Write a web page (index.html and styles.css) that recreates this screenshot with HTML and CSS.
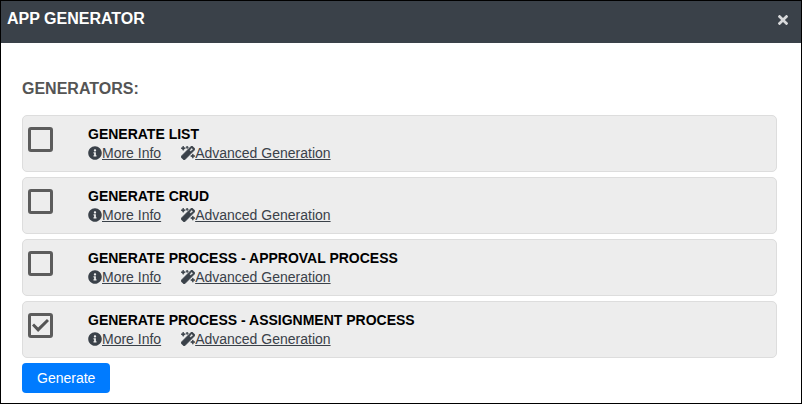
FILE: index.html
```html
<!DOCTYPE html>
<html lang="en">
<head>
<meta charset="utf-8">
<title>App Generator</title>
<link rel="stylesheet" href="styles.css">
</head>
<body>
<svg class="sprite" aria-hidden="true">
  <symbol id="info" viewBox="0 0 512 512"><path d="M256 8C119.043 8 8 119.083 8 256c0 136.997 111.043 248 248 248s248-111.003 248-248C504 119.083 392.957 8 256 8zm0 110c23.196 0 42 18.804 42 42s-18.804 42-42 42-42-18.804-42-42 18.804-42 42-42zm56 254c0 6.627-5.373 12-12 12h-88c-6.627 0-12-5.373-12-12v-24c0-6.627 5.373-12 12-12h12v-64h-12c-6.627 0-12-5.373-12-12v-24c0-6.627 5.373-12 12-12h64c6.627 0 12 5.373 12 12v100h12c6.627 0 12 5.373 12 12v24z"/></symbol>
  <symbol id="magic" viewBox="0 0 512 512"><path stroke="#3a4149" stroke-width="24" d="M224 96l16-32 32-16-32-16-16-32-16 32-32 16 32 16 16 32zM80 160l26.66-53.33L160 80l-53.34-26.67L80 0 53.34 53.33 0 80l53.34 26.67L80 160zm352 128l-26.66 53.33L352 368l53.34 26.67L432 448l26.66-53.33L512 368l-53.34-26.67L432 288zm70.62-193.77L417.77 9.38C411.53 3.12 403.34 0 395.15 0c-8.19 0-16.38 3.12-22.63 9.38L9.38 372.52c-12.5 12.5-12.5 32.76 0 45.25l84.85 84.85c6.25 6.25 14.44 9.37 22.62 9.37 8.19 0 16.38-3.12 22.63-9.37l363.14-363.15c12.5-12.48 12.5-32.75 0-45.24zM359.45 203.46l-50.91-50.91 86.6-86.6 50.91 50.91-86.6 86.6z"/></symbol>
</svg>
<main class="dialog">
  <header class="dialog-header">
    <h1 class="dialog-title">APP GENERATOR</h1>
    <button class="close" type="button" aria-label="Close">
      <svg viewBox="0 80 352 352" aria-hidden="true"><path d="M242.72 256l100.07-100.07c12.28-12.28 12.28-32.19 0-44.48l-22.24-22.24c-12.28-12.28-32.19-12.28-44.48 0L176 189.28 75.93 89.21c-12.28-12.28-32.19-12.28-44.48 0L9.21 111.45c-12.28 12.28-12.28 32.19 0 44.48L109.28 256 9.21 356.07c-12.28 12.28-12.28 32.19 0 44.48l22.24 22.24c12.28 12.28 32.2 12.28 44.48 0L176 322.72l100.07 100.07c12.28 12.28 32.2 12.28 44.48 0l22.24-22.24c12.28-12.28 12.28-32.19 0-44.48L242.72 256z"/></svg>
    </button>
  </header>
  <form class="dialog-body">
    <h2 class="section-title">GENERATORS:</h2>
    <div class="generators">
      <div class="generator">
        <input class="check" type="checkbox" id="gen-list">
        <div class="details">
          <label class="name" for="gen-list">GENERATE LIST</label>
          <div class="links">
            <a class="link" href="#"><svg class="icon" aria-hidden="true"><use href="#info"/></svg><span>More Info</span></a>
            <a class="link" href="#"><svg class="icon" aria-hidden="true"><use href="#magic"/></svg><span>Advanced Generation</span></a>
          </div>
        </div>
      </div>
      <div class="generator">
        <input class="check" type="checkbox" id="gen-crud">
        <div class="details">
          <label class="name" for="gen-crud">GENERATE CRUD</label>
          <div class="links">
            <a class="link" href="#"><svg class="icon" aria-hidden="true"><use href="#info"/></svg><span>More Info</span></a>
            <a class="link" href="#"><svg class="icon" aria-hidden="true"><use href="#magic"/></svg><span>Advanced Generation</span></a>
          </div>
        </div>
      </div>
      <div class="generator">
        <input class="check" type="checkbox" id="gen-approval">
        <div class="details">
          <label class="name" for="gen-approval">GENERATE PROCESS - APPROVAL PROCESS</label>
          <div class="links">
            <a class="link" href="#"><svg class="icon" aria-hidden="true"><use href="#info"/></svg><span>More Info</span></a>
            <a class="link" href="#"><svg class="icon" aria-hidden="true"><use href="#magic"/></svg><span>Advanced Generation</span></a>
          </div>
        </div>
      </div>
      <div class="generator">
        <input class="check" type="checkbox" id="gen-assignment" checked>
        <div class="details">
          <label class="name" for="gen-assignment">GENERATE PROCESS - ASSIGNMENT PROCESS</label>
          <div class="links">
            <a class="link" href="#"><svg class="icon" aria-hidden="true"><use href="#info"/></svg><span>More Info</span></a>
            <a class="link" href="#"><svg class="icon" aria-hidden="true"><use href="#magic"/></svg><span>Advanced Generation</span></a>
          </div>
        </div>
      </div>
    </div>
    <button class="submit" type="button">Generate</button>
  </form>
</main>
</body>
</html>
```
FILE: styles.css
```css
* {
  box-sizing: border-box;
}

body {
  margin: 0;
  background: #fff;
  font-family: "Liberation Sans", Arial, sans-serif;
  font-size: 14px;
  line-height: 19px;
}

.sprite {
  display: none;
}

.dialog {
  min-height: 100vh;
  border: 1px solid #000;
}

.dialog-header {
  display: flex;
  justify-content: space-between;
  align-items: flex-start;
  padding: 9px 13px 15px 6px;
  background: #3a4149;
}

.dialog-title {
  margin: 0;
  color: #fff;
  font-size: 16px;
  line-height: 18px;
}

.close {
  display: flex;
  padding: 5px 0 0;
  border: 0;
  background: none;
  fill: #d8d9db;
}

.close svg {
  width: 10px;
  height: 10px;
}

.dialog-body {
  padding: 37px 24px 10px 21px;
}

.section-title {
  margin: 0 0 17px;
  color: #555;
  font-size: 16px;
  line-height: 18px;
}

.generators {
  display: grid;
  gap: 5px;
  margin-bottom: 5px;
}

.generator {
  display: grid;
  grid-template-columns: 60px 1fr;
  align-items: start;
  padding: 9px 5px 8px;
  border: 1px solid #ddd;
  border-radius: 5px;
  background: #ededed;
}

.check {
  appearance: none;
  display: grid;
  place-items: center;
  width: 25px;
  height: 25px;
  margin: 2px 0 0;
  border: 3px solid #5c5c5c;
  border-radius: 3px;
}

.check:checked::before {
  content: "";
  width: 17px;
  height: 13px;
  background: #555;
  clip-path: polygon(0 50%, 12% 35%, 36% 66%, 88% 0, 100% 15%, 36% 100%);
}

.name {
  display: block;
  color: #000;
  font-weight: bold;
}

.links {
  display: flex;
  flex-wrap: wrap;
  gap: 0 20px;
}

.link {
  display: flex;
  align-items: flex-start;
  color: #3a4149;
  text-decoration: none;
}

.link span {
  text-decoration: underline;
}

.icon {
  width: 14px;
  height: 14px;
  margin-top: 2px;
  fill: #3a4149;
}

.submit {
  display: block;
  height: 30px;
  padding: 0 15px;
  border: 0;
  border-radius: 4px;
  background: #007bff;
  color: #fff;
  font: inherit;
}
```
